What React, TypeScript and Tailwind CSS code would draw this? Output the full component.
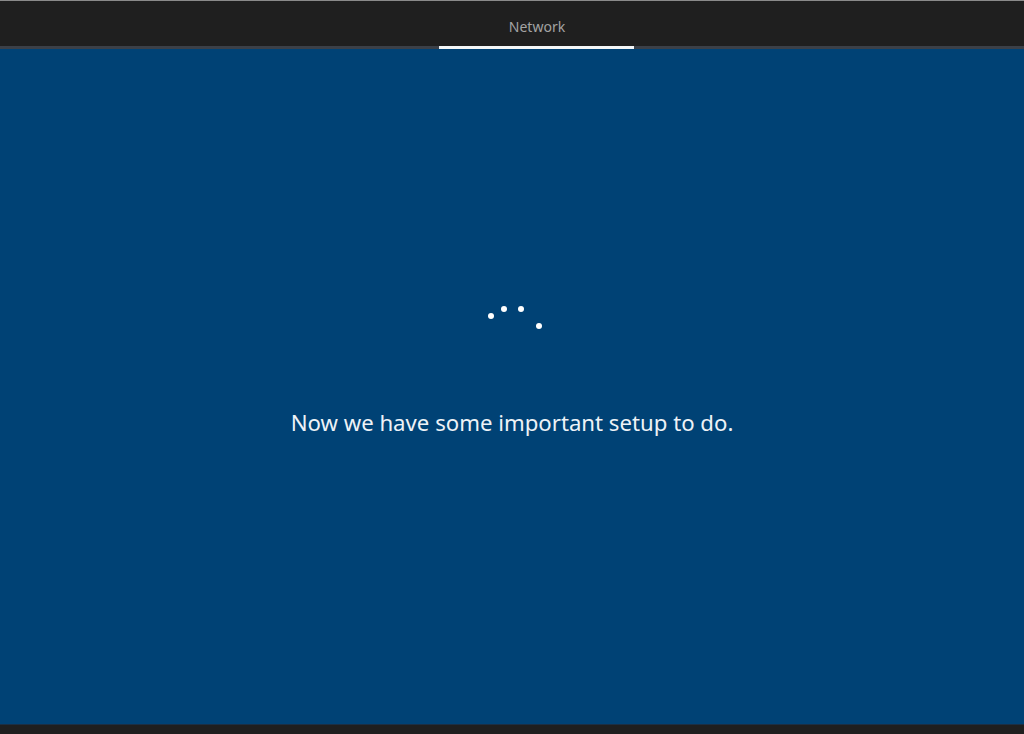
import React from "react";

export default function App() {
  return (
    <div className="w-[1024px] h-[734px] flex flex-col bg-[#004275] overflow-hidden" style={{ fontFamily: '"Noto Sans", "Open Sans", sans-serif' }}>
      <div className="h-[49px] flex flex-col bg-[#1f1f1f] border-t border-[#8a8a8a]">
        <div className="flex-1 flex items-center justify-center pl-[50px] pt-[6px]">
          <span className="text-[14px] text-[#a3a3a3]">Network</span>
        </div>
        <div className="h-[3px] bg-[#3b4048] flex">
          <div className="w-[439px]" />
          <div className="w-[195px] bg-[#f4f6f8]" />
        </div>
      </div>
      <div className="flex-1 flex flex-col items-center">
        <svg width="1024" height="60" viewBox="0 0 1024 60" className="mt-[242px]">
          <circle cx="491" cy="25" r="3" fill="#ffffff" />
          <circle cx="504" cy="18" r="3" fill="#ffffff" />
          <circle cx="521" cy="18" r="3" fill="#ffffff" />
          <circle cx="539" cy="35" r="3" fill="#ffffff" />
        </svg>
        <div className="mt-[55px] text-[22.2px] text-[#eef2f7]">Now we have some important setup to do.</div>
      </div>
      <div className="h-[10px] bg-[#1f1f1f] border-t border-[#1b2f44]" />
    </div>
  );
}
